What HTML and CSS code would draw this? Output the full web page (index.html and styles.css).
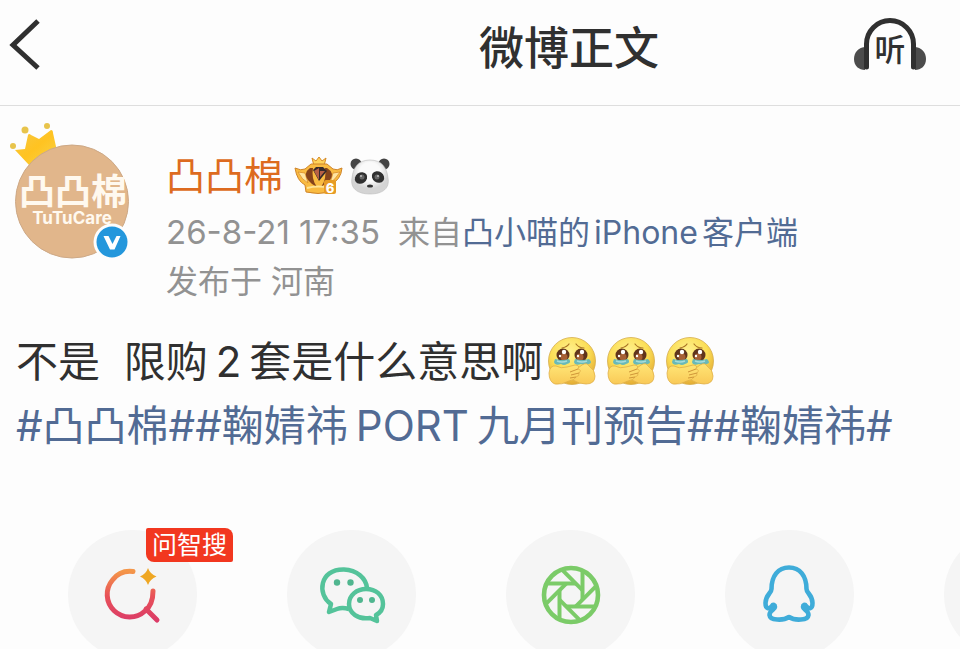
FILE: index.html
```html
<!DOCTYPE html>
<html lang="zh-CN">
<head>
<meta charset="utf-8">
<meta name="viewport" content="width=device-width, initial-scale=1">
<title>微博正文</title>
<link rel="stylesheet" href="styles.css">
</head>
<body>
<div class="page">
  <header class="topbar">
    <button class="icon-button" type="button" aria-label="返回">
      <svg width="34" height="54" viewBox="8 19 34 54"><path d="M38 22 13 46 38 69" fill="none" stroke="#303030" stroke-width="5"/></svg>
    </button>
    <h1 class="title">微博正文</h1>
    <button class="icon-button" type="button" aria-label="听">
      <svg width="76" height="56" viewBox="852 17 76 56">
        <path d="M866 47C858 47 854 53 854 59C854 66 859 70 865 70ZM914 47C922 47 926 53 926 59C926 66 921 70 915 70Z" fill="#4c4c4c"/>
        <path d="M866.500 67V44A23.500 23.500 0 0 1 913.500 44V67" fill="none" stroke="#303030" stroke-width="5" stroke-linecap="round"/>
        <text class="listen" x="890" y="61" text-anchor="middle">听</text>
      </svg>
    </button>
  </header>

  <main>
    <article>
      <div class="author">
        <svg class="avatar" width="124" height="140" viewBox="8 120 124 140" role="img" aria-label="凸凸棉 TuTuCare">
          <defs>
            <linearGradient id="gold" x1="0" y1="0" x2="1" y2="1"><stop offset="0" stop-color="#f6c845"/><stop offset=".5" stop-color="#ffc321"/><stop offset="1" stop-color="#f8d449"/></linearGradient>
          </defs>
          <g fill="#e8c44b"><circle cx="13" cy="146" r="3"/><circle cx="25" cy="130" r="3.500"/><circle cx="47" cy="126" r="3"/></g>
          <path d="M15 150 25 149 28 135Q29 133 31 135L39 139 51 130Q53 130 53 133L57 151 29 165Z" fill="url(#gold)"/>
          <circle cx="72" cy="201.500" r="56.500" fill="#e1b68b" stroke="#cda987"/>
          <text class="avatar-name" x="73" y="205" text-anchor="middle">凸凸棉</text>
          <text class="avatar-sub" x="72" y="224" text-anchor="middle">TuTuCare</text>
          <circle cx="112" cy="242" r="18.500" fill="#fdfdfd"/><circle cx="112" cy="242" r="15.500" fill="#2497dc"/>
          <path d="M103.500 236H108.500L112.500 244 116.500 236H120.500L114.500 249.500H110Z" fill="#fff"/>
        </svg>
        <div class="byline">
          <div class="name-row">
            <a class="name" href="#">凸凸棉</a>
            <svg width="50" height="40" viewBox="294 156 50 40" role="img" aria-label="会员 6 级">
              <path d="M313 158 317 161 320 157 323 161 327 158 325 166H315Z" fill="#ffd35a" stroke="#d68a25"/>
              <path d="M296 168Q302 171 306 169L312 164H328L334 169Q338 171 343 168Q342 180 331 185L331 192Q319 195 307 192L306 185Q298 181 296 168Z" fill="#f9bb41" stroke="#cf8429"/>
              <path d="M299 172Q303 180 309 183L306 173ZM341 172Q336 180 331 183L334 173Z" fill="#ffe5a1" stroke="#d98d29" stroke-width=".8"/>
              <path d="M311 168Q304 173 309 180Q312 184 318 187Q312 179 314 168ZM328 168Q336 173 331 180Q326 184 322 187Q328 179 326 168Z" fill="#85431b"/>
              <path d="M314 170 317 167H324L328 171 320 181Z" fill="#372a2b"/><path d="M315 171 320 168V180ZM321 171H326L321 177Z" fill="#b76145"/><path d="M308 188Q319 185 331 188" fill="none" stroke="#ffe595" stroke-width="2"/>
              <rect x="325" y="180" width="12" height="14" rx="2" fill="#e79c25"/><text class="level" x="331" y="193" text-anchor="middle">6</text>
            </svg>
            <svg width="42" height="40" viewBox="350 156 42 40" role="img" aria-label="熊猫">
              <defs><radialGradient id="fur" cy=".35"><stop offset=".55" stop-color="#fafafa"/><stop offset="1" stop-color="#d4d4d4"/></radialGradient></defs>
              <circle cx="357" cy="164" r="5.500" fill="#444"/><circle cx="385" cy="164" r="5.500" fill="#444"/>
              <path d="M371 160C383 160 388 168 389 178C391 188 384 194 371 194C358 194 351 188 353 178C354 168 359 160 371 160Z" fill="url(#fur)" stroke="#bcbcbc" stroke-width=".6"/>
              <ellipse cx="362" cy="178" rx="6.500" ry="5.500" transform="rotate(-35 362 178)" fill="#303030"/><ellipse cx="379" cy="177" rx="6.500" ry="5.500" transform="rotate(35 379 177)" fill="#303030"/>
              <circle cx="363" cy="177" r="2.500" fill="#666"/><circle cx="378" cy="177" r="2.500" fill="#666"/><circle cx="362" cy="176" r=".8" fill="#fff"/><circle cx="379" cy="176" r=".8" fill="#fff"/>
              <ellipse cx="371" cy="186" rx="3" ry="1.600" fill="#333"/>
            </svg>
          </div>
          <p class="meta"><time datetime="2026-08-21T17:35">26-8-21 17:35</time><span>来自<a href="#">凸小喵的<span class="device">iPhone</span>客户端</a></span></p>
          <p class="meta">发布于 河南</p>
        </div>
      </div>

      <p class="content">不是&nbsp; 限购<span class="latin">2</span>套是什么意思啊<span class="emojis">
        <svg width="50" height="50" viewBox="0 0 50 50" role="img" aria-label="感动">
          <defs>
            <radialGradient id="face" cx=".45" cy=".3" r=".75"><stop offset="0" stop-color="#fff18e"/><stop offset=".55" stop-color="#fbdd54"/><stop offset="1" stop-color="#dfa32e"/></radialGradient>
            <linearGradient id="hand" x1="0" y1="0" x2="0" y2="1"><stop offset="0" stop-color="#ffe575"/><stop offset="1" stop-color="#f9c957"/></linearGradient>
            <g id="moved">
              <circle cx="25" cy="25" r="23.500" fill="url(#face)" stroke="#d5ad4c" stroke-width=".8"/>
              <path d="M15 12Q20 11 22 8M29 8Q32 12 37 12" fill="none" stroke="#aa7424" stroke-width="1.200" stroke-linecap="round"/>
              <circle cx="16" cy="19" r="6.500" fill="#60341c"/><circle cx="34" cy="19" r="6.500" fill="#60341c"/>
              <circle cx="17" cy="21" r="3.500" fill="#a76034"/><circle cx="33" cy="21" r="3.500" fill="#a76034"/>
              <circle cx="17" cy="16" r="2.200" fill="#fff"/><circle cx="35" cy="16" r="2.200" fill="#fff"/><circle cx="13" cy="20" r="1.200" fill="#fff"/><circle cx="31" cy="20" r="1.200" fill="#fff"/>
              <path d="M8 23Q15 25 22 23Q25 27 20 28Q17 30 14 28Q8 30 7 26ZM28 23Q35 25 42 23Q46 27 42 28Q38 30 34 28Q28 30 27 26Z" fill="#69b9b8"/><path d="M10 25Q15 27 20 25M30 25Q35 27 40 25" fill="none" stroke="#a5dddc" stroke-width="1.500"/>
              <path d="M27 35 35 29Q40 26 42 30Q48 34 48 40Q48 48 39 48Q32 48 26 44Z" fill="url(#hand)" stroke="#dfae48" stroke-width=".8"/>
              <path d="M2 37Q3 29 9 30Q14 33 20 31L28 29Q33 29 31 33Q35 34 32 37Q33 40 29 41Q28 44 22 45Q15 49 8 48Q2 46 2 37Z" fill="url(#hand)" stroke="#dfae48" stroke-width=".8"/>
              <path d="M31 33 23 36M32 37 24 39M29 41 23 42" fill="none" stroke="#cf9639" stroke-width="1"/>
            </g>
          </defs>
          <use href="#moved"/>
        </svg>
        <svg width="50" height="50" viewBox="0 0 50 50" role="img" aria-label="感动"><use href="#moved"/></svg>
        <svg width="50" height="50" viewBox="0 0 50 50" role="img" aria-label="感动"><use href="#moved"/></svg>
      </span><br><a href="#">#凸凸棉#</a><a href="#">#鞠婧祎<span class="latin">PORT</span>九月刊预告#</a><a href="#">#鞠婧祎#</a></p>
    </article>

    <nav class="share" aria-label="分享">
      <button class="share-item" type="button" aria-label="问智搜">
        <svg width="60" height="60" viewBox="102 565 60 60">
          <defs><linearGradient id="search" x1="0" y1="0" x2="0" y2="1"><stop offset="0" stop-color="#f49649"/><stop offset=".5" stop-color="#e85258"/><stop offset="1" stop-color="#dc3c67"/></linearGradient></defs>
          <path d="M132 571.500Q119 570 111.500 580A22.500 22.500 0 0 0 144 611C149 607 152 600 152 591M145 609 156 620" fill="none" stroke="url(#search)" stroke-width="5" stroke-linecap="round" stroke-linejoin="round"/>
          <path d="M147 568Q149 574 155.500 576.500Q149 579 147 585Q145 579 139 576.500Q145 574 147 568Z" fill="#efa723"/>
        </svg>
        <span class="badge">问智搜</span>
      </button>
      <button class="share-item" type="button" aria-label="微信">
        <svg width="68" height="60" viewBox="319 565 68 60">
          <g fill="none" stroke="#54c39a" stroke-width="4.500" stroke-linejoin="round"><path d="M350 609Q343 607 338 609L330 612 332 604C318 595 320 569 345 569.500C358 570 367 578 368 588"/><path d="M367 589C377 589 384 595 384 604C384 610 381 613 377 615L378 621 371 618C359 620 350 613 350 604C350 595 358 589 367 589Z"/></g>
          <g fill="#50b68f"><circle cx="338" cy="582.500" r="3.200"/><circle cx="351.500" cy="582.500" r="3.200"/><circle cx="361" cy="600" r="3"/><circle cx="373" cy="600" r="3"/></g>
        </svg>
      </button>
      <button class="share-item" type="button" aria-label="朋友圈">
        <svg width="60" height="60" viewBox="-30 -30 60 60">
          <g fill="none" stroke="#7bcb68" stroke-width="4"><circle r="27" stroke-width="4.600"/>
            <path d="M-25 -11.500H5"/><path d="M-25 -11.500H5" transform="rotate(45)"/><path d="M-25 -11.500H5" transform="rotate(90)"/><path d="M-25 -11.500H5" transform="rotate(135)"/><path d="M-25 -11.500H5" transform="rotate(180)"/><path d="M-25 -11.500H5" transform="rotate(225)"/><path d="M-25 -11.500H5" transform="rotate(270)"/><path d="M-25 -11.500H5" transform="rotate(315)"/></g>
        </svg>
      </button>
      <button class="share-item" type="button" aria-label="QQ">
        <svg width="60" height="60" viewBox="758 565 60 60">
          <path d="M787 567.500C776 567.500 769.500 576 769.500 589C769.500 593 763.500 595 763.500 603C763.500 609 767 609.500 770 606C771 604 773 605 773 607C773 610 767.500 610 767.500 615C768 620.500 781 621 787 617C793 621 806 620.500 806.500 615C806.500 610 801 610 801 607C801 605 803 604 804 606C807 609.500 810.500 609 810.500 603C810.500 595 804.500 593 804.500 589C804.500 576 798 567.500 787 567.500Z" fill="none" stroke="#3facd9" stroke-width="4.600" stroke-linejoin="round"/>
        </svg>
      </button>
      <button class="share-item" type="button" aria-label="更多"></button>
    </nav>
  </main>
</div>
</body>
</html>
```
FILE: styles.css
```css
* {
  box-sizing: border-box;
}

body {
  margin: 0;
  background: #fdfdfd;
  color: #303030;
  font-family: Inter, "Noto Sans CJK SC", sans-serif;
}

button {
  padding: 0;
  border: 0;
  background: none;
  font: inherit;
}

a {
  color: #526b94;
  text-decoration: none;
}

svg {
  display: block;
  flex: none;
}

.page {
  height: 100vh;
  overflow: hidden;
}

.topbar {
  display: flex;
  align-items: center;
  height: 106px;
  padding: 0 32px 16px 8px;
  border-bottom: 1px solid #dedede;
}

.title {
  margin: 0 193px 0 auto;
  padding-top: 8px;
  font-size: 45px;
  font-weight: 500;
  line-height: 64px;
}

.listen {
  fill: #303030;
  font-size: 31px;
  font-weight: 500;
}

.author {
  display: flex;
  gap: 34px;
  padding: 14px 8px 0;
}

.avatar-name {
  fill: #fff9ef;
  font-size: 36px;
  font-weight: 700;
}

.avatar-sub {
  fill: #fff9ef;
  font-size: 17px;
  font-weight: 700;
}

.byline {
  padding-top: 28px;
}

.name-row {
  display: flex;
  align-items: center;
  gap: 6px;
  height: 56px;
  margin-bottom: 4px;
}

.name {
  margin-right: 4px;
  color: #dd6b20;
  font-size: 39px;
  line-height: 52px;
}

.level {
  fill: #fff;
  font-size: 13px;
  font-weight: 800;
}

.meta {
  display: flex;
  gap: 18px;
  margin: 0;
  color: #929292;
  font-size: 32px;
  line-height: 49px;
  white-space: nowrap;
}

.meta time {
  font-size: 33px;
}

.device {
  padding: 0 4px;
}

.content {
  margin: 24px 0 0;
  padding: 0 16px;
  font-size: 42px;
  line-height: 64px;
}

.emojis {
  display: inline-flex;
  gap: 9px;
  margin-left: 4px;
  vertical-align: -9px;
}

.latin {
  padding: 0 8px;
}

.share {
  display: flex;
  gap: 90px;
  padding: 72px 0 0 68px;
}

.share-item {
  position: relative;
  display: flex;
  flex: none;
  align-items: center;
  justify-content: center;
  width: 129px;
  height: 129px;
  border-radius: 50%;
  background: #f5f5f5;
}

.badge {
  position: absolute;
  top: -2px;
  left: 78px;
  padding: 0 6px;
  border-radius: 2px 8px 2px 8px;
  background: #f2371f;
  color: #fff;
  font-size: 25px;
  line-height: 34px;
  white-space: nowrap;
}
```
